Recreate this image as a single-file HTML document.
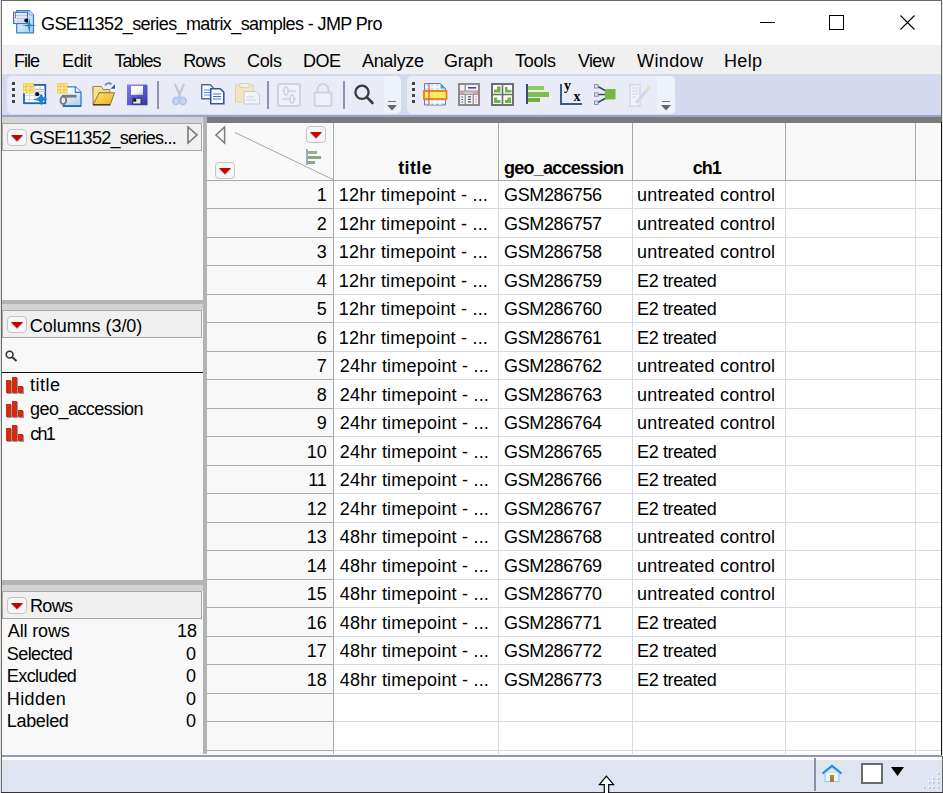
<!DOCTYPE html>
<html><head><meta charset="utf-8">
<style>
*{box-sizing:border-box;margin:0;padding:0}
html,body{width:943px;height:793px;overflow:hidden;background:#e2e2e2}
body{position:relative;font-family:"Liberation Sans",sans-serif;color:#000}
.a{position:absolute}
.t{position:absolute;white-space:nowrap;line-height:20px;font-size:18px;color:#000}
.btn{position:absolute;width:20px;height:17px;border:1px solid #c4c4c4;border-radius:4px;background:#f6f6f6}
.btn:after{content:"";position:absolute;left:2.5px;top:4.5px;border-left:6px solid transparent;border-right:6px solid transparent;border-top:6.5px solid #cc0000;filter:drop-shadow(0 1px 0.6px rgba(0,0,0,.35))}
.hl{position:absolute;height:1px}
.vl{position:absolute;width:1px}
svg{position:absolute;overflow:visible}
</style></head><body>
<!-- window frame -->
<div class="a" style="left:1px;top:0;width:941px;height:793px;background:#6a6a6a"></div>
<div class="a" style="left:941px;top:122px;width:1px;height:634px;background:#111"></div><div class="a" style="left:942px;top:756px;width:1px;height:37px;background:#666"></div>
<div class="a" style="left:1px;top:792px;width:942px;height:1px;background:#333"></div>
<!-- title bar -->
<div class="a" style="left:2px;top:1px;width:939px;height:44px;background:#fff"></div>
<svg style="left:13px;top:10px" width="24" height="24" viewBox="0 0 24 24">
 <defs><linearGradient id="tg" x1="0" y1="0" x2="1" y2="1"><stop offset="0" stop-color="#eef5fc"/><stop offset="1" stop-color="#a9cdee"/></linearGradient></defs>
 <path d="M3.7 0.6h12.5l4.3 4.3v17.9h-16.8z" fill="url(#tg)" stroke="#3b7cc0" stroke-width="1.2"/>
 <path d="M16.2 0.6v4.3h4.3" fill="#dbe8f6" stroke="#6a9ad0" stroke-width="0.8"/>
 <rect x="0.6" y="2.3" width="13.8" height="11.2" fill="#f4f6fb" stroke="#3a78bc" stroke-width="1.2"/>
 <path d="M1 5.5h13M1 8.5h13M1 11h13" stroke="#a8c0e0" stroke-width="0.9"/>
 <path d="M5 3v10M8 3v10M11 3v10" stroke="#c0d0ea" stroke-width="1"/>
 <path d="M2.5 3v5" stroke="#f05858" stroke-width="1"/>
 <circle cx="13.3" cy="10.6" r="2" fill="#000"/>
 <path d="M9 15.3 C12 15.5 13.5 15 15 14.5 L16.5 8 L17.3 14.5 L23.5 15.3 L17.3 16.3 L16.5 23.5 L15 16.5 C13 16 11 16 9 15.3Z" fill="#1f85c6"/>
</svg>
<!--TITLECTRL-->
<div class="a" style="left:760px;top:22px;width:15px;height:1px;background:#000"></div>
<div class="a" style="left:829px;top:15px;width:15px;height:15px;border:1px solid #000"></div>
<svg style="left:900px;top:15px" width="15" height="15"><path d="M0.5 0.5L14.5 14.5M14.5 0.5L0.5 14.5" stroke="#000" stroke-width="1.1"/></svg>
<!-- menu bar -->
<div class="a" style="left:2px;top:45px;width:939px;height:29px;background:#f0f0f0"></div>
<!-- toolbar -->
<div class="a" style="left:2px;top:74px;width:939px;height:41px;background:#d5d9ed"></div>
<div class="a" style="left:2px;top:115px;width:939px;height:2px;background:#9aa3d0"></div>
<div class="a" style="left:7px;top:76px;width:394px;height:38px;background:#e9ecf6;border-radius:5px"></div>
<div class="a" style="left:384px;top:76px;width:17px;height:38px;background:#eef2fb;border-radius:0 5px 5px 0"></div>
<div class="a" style="left:407px;top:76px;width:268px;height:38px;background:#e9ecf6;border-radius:5px"></div>
<div class="a" style="left:657px;top:76px;width:18px;height:38px;background:#eef2fb;border-radius:0 5px 5px 0"></div>
<!-- grips -->
<div class="a" style="left:12px;top:82px;width:3px;height:3px;background:#444;box-shadow:0 6px 0 #444,0 12px 0 #444,0 18px 0 #444"></div>
<div class="a" style="left:412px;top:82px;width:3px;height:3px;background:#444;box-shadow:0 6px 0 #444,0 12px 0 #444,0 18px 0 #444"></div>
<!-- separators -->
<div class="a" style="left:157px;top:81px;width:2px;height:28px;background:#8f92ad"></div>
<div class="a" style="left:267px;top:81px;width:2px;height:28px;background:#8f92ad"></div>
<div class="a" style="left:343px;top:81px;width:2px;height:28px;background:#8f92ad"></div>
<!-- icon 1 new table -->
<svg style="left:23px;top:82px" width="25" height="25" viewBox="0 0 25 25">
 <rect x="1" y="2.9" width="21.3" height="18.3" fill="#fff" stroke="#1f62ad" stroke-width="1.8"/>
 <path d="M2 9.5h20M2 13.5h20M2 17.5h20" stroke="#c8d8ee" stroke-width="1"/>
 <path d="M11 7.5h11" stroke="#f0a0a8" stroke-width="1.2"/>
 <path d="M6.5 4v16M12 4v16M17 4v16" stroke="#c9d8ee" stroke-width="1.2"/>
 <rect x="0" y="1" width="10.8" height="10.5" fill="#f0cc50"/>
 <g fill="#fbe9a0"><circle cx="1.8" cy="2.8" r="1.1"/><circle cx="5.4" cy="2.8" r="1.1"/><circle cx="9" cy="2.8" r="1.1"/><circle cx="1.8" cy="6.3" r="1.1"/><circle cx="5.4" cy="6.3" r="1.8"/><circle cx="9" cy="6.3" r="1.1"/><circle cx="1.8" cy="9.8" r="1.1"/><circle cx="5.4" cy="9.8" r="1.1"/><circle cx="9" cy="9.8" r="1.1"/></g>
 <circle cx="14.2" cy="12.2" r="2.1" fill="#111"/>
 <path d="M10.3 17.6 Q14.5 16.6 16.3 14.8 L18.2 11.6 L20.2 15 Q22 16.2 24.6 17 Q22 17.8 20.2 19 L18.4 23.6 L16.4 19.4 Q14 18.3 10.3 17.6Z" fill="#1b87c9"/>
</svg>
<!-- icon 2 new script -->
<svg style="left:54px;top:80px" width="30" height="28" viewBox="0 0 30 28">
 <defs><linearGradient id="dg" x1="0" y1="0" x2="0.4" y2="1"><stop offset="0.2" stop-color="#ffffff"/><stop offset="1" stop-color="#b4d4f0"/></linearGradient></defs>
 <path d="M9 6.8h12.5l5.5 5.5v13.8h-18z" fill="url(#dg)"/>
 <path d="M9 6.8h12.5l5.5 5.5v13.8h-18" fill="none" stroke="#3a7cc0" stroke-width="1.3"/>
 <path d="M21.3 6.8v5.5h5.7" fill="#e8f2fc" stroke="#3a7cc0" stroke-width="1.2"/>
 <path d="M8.5 26h18.5" stroke="#1f62b0" stroke-width="1.6"/>
 <rect x="3" y="3" width="10.5" height="10.5" fill="#f0cc50"/>
 <g fill="#fbe9a0"><circle cx="4.8" cy="4.8" r="1.1"/><circle cx="8.2" cy="4.8" r="1.1"/><circle cx="11.6" cy="4.8" r="1.1"/><circle cx="4.8" cy="8.2" r="1.1"/><circle cx="8.2" cy="8.2" r="1.6"/><circle cx="11.6" cy="8.2" r="1.1"/><circle cx="4.8" cy="11.6" r="1.1"/><circle cx="8.2" cy="11.6" r="1.1"/><circle cx="11.6" cy="11.6" r="1.1"/></g>
 <path d="M8 16.2h14.5" stroke="#7a7a7a" stroke-width="2.8"/>
 <ellipse cx="9.3" cy="20.2" rx="2.8" ry="3.9" fill="none" stroke="#777" stroke-width="1.9"/>
</svg>
<!-- icon 3 open folder -->
<svg style="left:89px;top:80px" width="30" height="28" viewBox="0 0 30 28">
 <defs><linearGradient id="fb" x1="0" y1="0" x2="1" y2="1"><stop offset="0" stop-color="#faf2a8"/><stop offset="1" stop-color="#e8cc70"/></linearGradient>
 <linearGradient id="ff" x1="0" y1="0" x2="1" y2="1"><stop offset="0" stop-color="#fbe070"/><stop offset="0.6" stop-color="#f6c640"/><stop offset="1" stop-color="#e89a20"/></linearGradient></defs>
 <path d="M4 6.5h8.5l1.5 3h6.8v3.5h-16.8z" fill="url(#fb)" stroke="#9a8658" stroke-width="1"/>
 <path d="M4 6.5v18h3l3-11.5" fill="#f4e490" stroke="#9a8658" stroke-width="1"/>
 <path d="M10.2 12.8h15.3l-4.3 12h-17.2z" fill="url(#ff)" stroke="#8a7448" stroke-width="1"/>
 <path d="M4 24.8h17.2" stroke="#3a2a10" stroke-width="1.2"/>
 <path d="M16 5.3c1.5-2.5 4.5-2.8 6.5-1" fill="none" stroke="#6a82a8" stroke-width="1.6"/>
 <path d="M21.6 8.8l4.4-4.5v4.5z" fill="#3c5c94"/>
</svg>
<!-- icon 4 save -->
<svg style="left:126px;top:84px" width="22" height="22" viewBox="0 0 22 22">
 <defs><linearGradient id="fg" x1="0" y1="0" x2="1" y2="1"><stop offset="0" stop-color="#8484ea"/><stop offset="0.5" stop-color="#5a5ad2"/><stop offset="1" stop-color="#34349a"/></linearGradient>
 <linearGradient id="lg" x1="0" y1="0" x2="1" y2="1"><stop offset="0.5" stop-color="#fdfdff"/><stop offset="1" stop-color="#c8d0ec"/></linearGradient></defs>
 <path d="M1 0.5h19.5l1 1v19.8h-20.5z" fill="url(#fg)"/>
 <rect x="5" y="1.8" width="12" height="9" fill="url(#lg)"/>
 <rect x="6.8" y="14.2" width="8.2" height="5.8" fill="#dfe4f0" stroke="#1a1a3a" stroke-width="0.8"/>
 <rect x="7.2" y="14.6" width="3" height="3" fill="#111"/>
</svg>
<!-- scissors disabled -->
<svg style="left:172px;top:84px" width="16" height="22" viewBox="0 0 16 22">
 <path d="M3 0L9 14M12 0L6 14" stroke="#c4c8d4" stroke-width="2.2"/>
 <ellipse cx="4" cy="17" rx="3.2" ry="3.6" fill="#c8d5ee" stroke="#b3c3e6" stroke-width="1.6"/>
 <ellipse cx="11" cy="17" rx="3.2" ry="3.6" fill="#c8d5ee" stroke="#b3c3e6" stroke-width="1.6"/>
</svg>
<!-- copy -->
<svg style="left:201px;top:84px" width="24" height="21" viewBox="0 0 24 21">
 <path d="M0.7 0.7h8.5l3 3v11h-11.5z" fill="#fff" stroke="#506aa0" stroke-width="1.4"/>
 <path d="M3 6h6M3 8.5h6M3 11h6" stroke="#5c8ed0" stroke-width="1"/>
 <path d="M9.7 4.7h9.5l3.6 3.6v11.5h-13.1z" fill="#fff" stroke="#2b55b0" stroke-width="1.6"/>
 <path d="M12 10h8M12 12.5h8M12 15h8" stroke="#3a74cc" stroke-width="1"/>
</svg>
<!-- paste disabled -->
<svg style="left:235px;top:83px" width="25" height="22" viewBox="0 0 25 22">
 <rect x="0.5" y="2" width="18" height="17" fill="#f3e6bf" stroke="#ddd2b0"/>
 <rect x="5" y="0.5" width="9" height="4" fill="#efefe8" stroke="#d4d4cc"/>
 <path d="M9 8.5h12l3.5 3.5v9h-15.5z" fill="#f1f4f9" stroke="#c4cbd8"/>
 <path d="M11 14h8M11 17h10" stroke="#cbd2de"/>
</svg>
<!-- disabled slider box -->
<svg style="left:277px;top:83px" width="24" height="24" viewBox="0 0 24 24">
 <rect x="1" y="1" width="22" height="22" rx="2" fill="#eef1f8" stroke="#d0d3dc" stroke-width="2"/>
 <path d="M5 8h14M5 16h14" stroke="#d0d3dc" stroke-width="1.6"/>
 <ellipse cx="9" cy="8" rx="2" ry="4" fill="#eef1f8" stroke="#d0d3dc" stroke-width="1.6"/>
 <ellipse cx="15" cy="16" rx="2" ry="4" fill="#eef1f8" stroke="#d0d3dc" stroke-width="1.6"/>
</svg>
<!-- lock disabled -->
<svg style="left:313px;top:83px" width="20" height="24" viewBox="0 0 20 24">
 <path d="M4.5 9.5v-3a5.5 5.5 0 0 1 11 0v3" fill="none" stroke="#d0d3dc" stroke-width="2"/>
 <rect x="1.5" y="9.5" width="17" height="13.5" rx="1" fill="#eef1f8" stroke="#d0d3dc" stroke-width="2"/>
</svg>
<!-- magnifier -->
<svg style="left:353px;top:84px" width="22" height="21" viewBox="0 0 22 21">
 <circle cx="9" cy="8.3" r="6.6" fill="none" stroke="#3a3a3a" stroke-width="2.3"/>
 <path d="M13.8 13.2L19.5 19" stroke="#3a3a3a" stroke-width="2.6" stroke-linecap="round"/>
</svg>
<!-- chevrons -->
<div class="a" style="left:388px;top:100.5px;width:8px;height:1.5px;background:#777"></div>
<svg style="left:387px;top:104.5px" width="10" height="6"><path d="M0 0h10l-5 5.5z" fill="#666"/></svg>
<div class="a" style="left:662px;top:100.5px;width:8px;height:1.5px;background:#777"></div>
<svg style="left:661px;top:104.5px" width="10" height="6"><path d="M0 0h10l-5 5.5z" fill="#666"/></svg>
<!-- data table icon -->
<svg style="left:423px;top:83px" width="25" height="23" viewBox="0 0 25 23">
 <path d="M1.5 0.5h16l5 5v16.5h-21z" fill="#cfe1f6" stroke="#6d78b8" stroke-width="1"/>
 <path d="M2 4h16M2 15h20M2 19h20M7 1v21M12 1v21M17 1v21" stroke="#fff" stroke-width="1.3"/>
 <path d="M17.5 0.5v5h5" fill="#4aa0e8"/>
 <rect x="1" y="8" width="22.5" height="8" fill="#f2ee6a" stroke="#f07a10" stroke-width="1.8"/><path d="M4 12h2.5M9 12h2.5M14 12h2.5M19 12h2" stroke="#e8f050" stroke-width="3"/>
 <path d="M6 1v21" stroke="#f05050" stroke-width="1.2"/>
</svg>
<!-- tabulate -->
<svg style="left:458px;top:83px" width="22" height="23" viewBox="0 0 22 23">
 <rect x="1" y="1" width="20" height="21" fill="#9a9a9a" stroke="#8a8a8a" stroke-width="2"/>
 <rect x="2" y="2" width="4.5" height="5.5" fill="#f4f4f8"/>
 <rect x="8" y="2" width="12" height="5.5" fill="#f4f4f8"/>
 <path d="M10 4.8h8" stroke="#3a3e80" stroke-width="1.5"/>
 <rect x="2" y="8.5" width="18" height="2.5" fill="#c8c8d8"/>
 <path d="M2 9.7h4.5M15 9.7h5" stroke="#f08a9a" stroke-width="2"/>
 <rect x="2" y="12" width="4.5" height="9" fill="#f4f4f8"/>
 <rect x="8" y="12" width="6.5" height="9" fill="#f4f4f8"/>
 <rect x="16" y="12" width="4" height="9" fill="#f4f4f8"/>
 <path d="M4.3 13.5v1M4.3 16v1M4.3 18.5v1" stroke="#3a3e80" stroke-width="1.5"/>
 <path d="M10 13.8h3M10 16.3h3M10 18.8h3" stroke="#3a5c80" stroke-width="1.3"/>
 <path d="M18 13.5v1M18 16v1M18 18.5v1" stroke="#f06070" stroke-width="1.2"/>
</svg>
<!-- grid green -->
<svg style="left:491px;top:83px" width="23" height="23" viewBox="0 0 23 23">
 <rect x="1" y="1" width="21" height="21" fill="#fbfbfb" stroke="#6e6e6e" stroke-width="2"/>
 <path d="M11.5 1v21M1 11.5h21" stroke="#6e6e6e" stroke-width="1.6"/>
 <path d="M3 9.5v-3h3v-3h3.5v6z" fill="#72b43e"/>
 <path d="M14 9.5v-5.5h2.5v3h4v2.5z" fill="#72b43e"/>
 <path d="M3 20v-5.5h3v2.5h3.5v3z" fill="#72b43e"/>
 <path d="M14 20v-3h2.5v-2.5h3.5v5.5z" fill="#72b43e"/>
</svg>
<!-- bar chart -->
<div class="a" style="left:526px;top:84px;width:2px;height:20px;background:#3a4e70"></div>
<div class="a" style="left:528px;top:86px;width:16px;height:4px;background:#8ccc60"></div>
<div class="a" style="left:528px;top:92px;width:21px;height:4.5px;background:#7cbf50"></div>
<div class="a" style="left:528px;top:98px;width:12px;height:4px;background:#6cae40"></div>
<!-- fit y by x -->
<div class="a" style="left:560px;top:84px;width:2px;height:20px;background:#3d5a80"></div>
<div class="a" style="left:560px;top:102.5px;width:22px;height:2px;background:#3d5a80"></div>
<div class="a" style="left:564px;top:79px;font-family:'Liberation Serif';font-weight:700;font-size:14px;line-height:14px">y</div>
<div class="a" style="left:573.5px;top:90px;font-family:'Liberation Serif';font-weight:700;font-size:14px;line-height:14px">x</div>
<!-- model -->
<svg style="left:594px;top:84px" width="22" height="21" viewBox="0 0 22 21">
 <path d="M3 2L12 7M3 10.5h9M3 19L12 14" stroke="#3a4a6a" stroke-width="1.6"/>
 <rect x="0.5" y="0.5" width="3.5" height="3.5" fill="#dfe3f0" stroke="#8a92b8"/>
 <rect x="0.5" y="8.8" width="3.5" height="3.5" fill="#dfe3f0" stroke="#8a92b8"/>
 <rect x="0.5" y="17" width="3.5" height="3.5" fill="#dfe3f0" stroke="#8a92b8"/>
 <rect x="11" y="5" width="10.5" height="10.5" fill="#76b646"/>
</svg>
<!-- script disabled -->
<svg style="left:629px;top:84px" width="22" height="23" viewBox="0 0 22 23">
 <rect x="1" y="0.7" width="10" height="21.5" fill="#f0f3f9" stroke="#d2d8e2" stroke-width="1.4"/>
 <path d="M3 4h6M3 7h6M3 10h6M3 13h4" stroke="#d2d8e2" stroke-width="1"/>
 <path d="M7 19L19 5" stroke="#d3d9e3" stroke-width="3.4"/>
 <circle cx="19.5" cy="4.3" r="2" fill="#f3dcb4"/>
</svg>

<!-- gray band -->
<div class="a" style="left:2px;top:117px;width:201px;height:6px;background:#d3d3d3"></div>
<div class="a" style="left:207px;top:117px;width:734px;height:6px;background:#7a7a7a"></div>
<div class="a" style="left:203px;top:117px;width:4px;height:637px;background:#b3b3b3"></div>
<!-- left panel -->
<div class="a" style="left:2px;top:123px;width:201px;height:631px;background:#f8f8f8"></div>
<!-- box 1 -->
<div class="a" style="left:2px;top:123px;width:200px;height:28px;background:#f0f0f0;border:1px solid #a6a6a6"></div>
<div class="btn" style="left:7px;top:129px"></div>
<svg style="left:187px;top:126px" width="11" height="18"><path d="M1 1L10 9L1 17Z" fill="none" stroke="#777" stroke-width="1.6" stroke-linejoin="miter"/></svg>
<!-- splitter 1 -->
<div class="a" style="left:2px;top:300px;width:201px;height:4px;background:#b3b3b3"></div>
<div class="a" style="left:2px;top:304px;width:201px;height:6px;background:#d3d3d3"></div>
<!-- box 2 -->
<div class="a" style="left:2px;top:310px;width:200px;height:28px;background:#f0f0f0;border:1px solid #a6a6a6"></div>
<div class="btn" style="left:7px;top:316px"></div>
<svg style="left:5px;top:350px" width="13" height="12" viewBox="0 0 13 12"><circle cx="4.6" cy="4.6" r="3.4" fill="none" stroke="#333" stroke-width="1.6"/><path d="M7.3 7.3L11.5 11" stroke="#333" stroke-width="2"/></svg>
<div class="a" style="left:2px;top:372px;width:201px;height:1px;background:#111"></div>
<!-- column icons -->
<svg style="left:6px;top:377px" width="19" height="17" viewBox="0 0 19 17"><g fill="#9a9a9a"><rect x="1" y="4" width="5" height="13"/><rect x="7" y="1" width="5" height="16"/><rect x="13" y="10" width="5" height="7"/></g><g fill="#d42a10"><rect x="0" y="3" width="5" height="13"/><rect x="6" y="0" width="5" height="16"/><rect x="12" y="9" width="5" height="7"/></g></svg>
<svg style="left:6px;top:401px" width="19" height="17" viewBox="0 0 19 17"><g fill="#9a9a9a"><rect x="1" y="4" width="5" height="13"/><rect x="7" y="1" width="5" height="16"/><rect x="13" y="10" width="5" height="7"/></g><g fill="#d42a10"><rect x="0" y="3" width="5" height="13"/><rect x="6" y="0" width="5" height="16"/><rect x="12" y="9" width="5" height="7"/></g></svg>
<svg style="left:6px;top:425px" width="19" height="17" viewBox="0 0 19 17"><g fill="#9a9a9a"><rect x="1" y="4" width="5" height="13"/><rect x="7" y="1" width="5" height="16"/><rect x="13" y="10" width="5" height="7"/></g><g fill="#d42a10"><rect x="0" y="3" width="5" height="13"/><rect x="6" y="0" width="5" height="16"/><rect x="12" y="9" width="5" height="7"/></g></svg>
<!-- splitter 2 -->
<div class="a" style="left:2px;top:580px;width:201px;height:5px;background:#b3b3b3"></div>
<div class="a" style="left:2px;top:585px;width:201px;height:6px;background:#d3d3d3"></div>
<!-- box 3 -->
<div class="a" style="left:2px;top:591px;width:200px;height:28px;background:#f0f0f0;border:1px solid #a6a6a6"></div>
<div class="btn" style="left:7px;top:597px"></div>

<!-- grid -->
<div class="a" style="left:207px;top:123px;width:734px;height:631px;background:#f8f8f8"></div>
<div class="a" style="left:334px;top:181px;width:607px;height:573px;background:#fff"></div>
<div class="a" style="left:207px;top:180px;width:734px;height:1px;background:#a9a9a9"></div>
<div class="a" style="left:333px;top:123px;width:1px;height:57px;background:#a9a9a9"></div>
<div class="a" style="left:498px;top:123px;width:1px;height:57px;background:#a9a9a9"></div>
<div class="a" style="left:632px;top:123px;width:1px;height:57px;background:#a9a9a9"></div>
<div class="a" style="left:785px;top:123px;width:1px;height:57px;background:#a9a9a9"></div>
<div class="a" style="left:915px;top:123px;width:1px;height:57px;background:#a9a9a9"></div>
<div class="a" style="left:333px;top:181px;width:1px;height:573px;background:#a9a9a9"></div>
<div class="a" style="left:498px;top:181px;width:1px;height:573px;background:#d9d9e3"></div>
<div class="a" style="left:632px;top:181px;width:1px;height:573px;background:#d9d9e3"></div>
<div class="a" style="left:785px;top:181px;width:1px;height:573px;background:#d9d9e3"></div>
<div class="a" style="left:915px;top:181px;width:1px;height:573px;background:#d9d9e3"></div>
<div class="a" style="left:207px;top:208px;width:126px;height:1px;background:#a9a9a9"></div>
<div class="a" style="left:334px;top:208px;width:607px;height:1px;background:#d9d9e3"></div>
<div class="a" style="left:207px;top:237px;width:126px;height:1px;background:#a9a9a9"></div>
<div class="a" style="left:334px;top:237px;width:607px;height:1px;background:#d9d9e3"></div>
<div class="a" style="left:207px;top:265px;width:126px;height:1px;background:#a9a9a9"></div>
<div class="a" style="left:334px;top:265px;width:607px;height:1px;background:#d9d9e3"></div>
<div class="a" style="left:207px;top:294px;width:126px;height:1px;background:#a9a9a9"></div>
<div class="a" style="left:334px;top:294px;width:607px;height:1px;background:#d9d9e3"></div>
<div class="a" style="left:207px;top:322px;width:126px;height:1px;background:#a9a9a9"></div>
<div class="a" style="left:334px;top:322px;width:607px;height:1px;background:#d9d9e3"></div>
<div class="a" style="left:207px;top:351px;width:126px;height:1px;background:#a9a9a9"></div>
<div class="a" style="left:334px;top:351px;width:607px;height:1px;background:#d9d9e3"></div>
<div class="a" style="left:207px;top:379px;width:126px;height:1px;background:#a9a9a9"></div>
<div class="a" style="left:334px;top:379px;width:607px;height:1px;background:#d9d9e3"></div>
<div class="a" style="left:207px;top:408px;width:126px;height:1px;background:#a9a9a9"></div>
<div class="a" style="left:334px;top:408px;width:607px;height:1px;background:#d9d9e3"></div>
<div class="a" style="left:207px;top:436px;width:126px;height:1px;background:#a9a9a9"></div>
<div class="a" style="left:334px;top:436px;width:607px;height:1px;background:#d9d9e3"></div>
<div class="a" style="left:207px;top:465px;width:126px;height:1px;background:#a9a9a9"></div>
<div class="a" style="left:334px;top:465px;width:607px;height:1px;background:#d9d9e3"></div>
<div class="a" style="left:207px;top:493px;width:126px;height:1px;background:#a9a9a9"></div>
<div class="a" style="left:334px;top:493px;width:607px;height:1px;background:#d9d9e3"></div>
<div class="a" style="left:207px;top:522px;width:126px;height:1px;background:#a9a9a9"></div>
<div class="a" style="left:334px;top:522px;width:607px;height:1px;background:#d9d9e3"></div>
<div class="a" style="left:207px;top:550px;width:126px;height:1px;background:#a9a9a9"></div>
<div class="a" style="left:334px;top:550px;width:607px;height:1px;background:#d9d9e3"></div>
<div class="a" style="left:207px;top:579px;width:126px;height:1px;background:#a9a9a9"></div>
<div class="a" style="left:334px;top:579px;width:607px;height:1px;background:#d9d9e3"></div>
<div class="a" style="left:207px;top:607px;width:126px;height:1px;background:#a9a9a9"></div>
<div class="a" style="left:334px;top:607px;width:607px;height:1px;background:#d9d9e3"></div>
<div class="a" style="left:207px;top:636px;width:126px;height:1px;background:#a9a9a9"></div>
<div class="a" style="left:334px;top:636px;width:607px;height:1px;background:#d9d9e3"></div>
<div class="a" style="left:207px;top:664px;width:126px;height:1px;background:#a9a9a9"></div>
<div class="a" style="left:334px;top:664px;width:607px;height:1px;background:#d9d9e3"></div>
<div class="a" style="left:207px;top:693px;width:126px;height:1px;background:#a9a9a9"></div>
<div class="a" style="left:334px;top:693px;width:607px;height:1px;background:#d9d9e3"></div>
<div class="a" style="left:207px;top:721px;width:126px;height:1px;background:#a9a9a9"></div>
<div class="a" style="left:334px;top:721px;width:607px;height:1px;background:#d9d9e3"></div>
<div class="a" style="left:207px;top:750px;width:126px;height:1px;background:#a9a9a9"></div>
<div class="a" style="left:334px;top:750px;width:607px;height:1px;background:#d9d9e3"></div>
<svg style="left:215px;top:126px" width="11" height="18"><path d="M9.6 1L1 9L9.6 17Z" fill="none" stroke="#7a7a7a" stroke-width="1.5"/></svg>
<svg style="left:207px;top:123px" width="127" height="58"><path d="M28 9.5L126 56.5" stroke="#a8a8a8" stroke-width="1"/></svg>
<div class="btn" style="left:306px;top:126px"></div>
<div class="btn" style="left:215px;top:162px"></div>
<div class="a" style="left:306px;top:149px;width:1.5px;height:16px;background:#9aaac8"></div>
<div class="a" style="left:308px;top:151px;width:9px;height:3px;background:#9aae94"></div>
<div class="a" style="left:308px;top:156px;width:13px;height:3px;background:#8ea488"></div>
<div class="a" style="left:308px;top:161px;width:7px;height:3px;background:#90a68c"></div>

<div class="t" id="ttl" style="left:41.00px;top:13.56px;font-size:18px;font-weight:400;letter-spacing:-0.615px">GSE11352_series_matrix_samples - JMP Pro</div>
<div class="t" id="m0" style="left:14.00px;top:50.76px;font-size:18px;font-weight:400;letter-spacing:-1.000px">File</div>
<div class="t" id="m1" style="left:62.00px;top:50.76px;font-size:18px;font-weight:400;letter-spacing:-0.333px">Edit</div>
<div class="t" id="m2" style="left:114.40px;top:50.76px;font-size:18px;font-weight:400;letter-spacing:-1.000px">Tables</div>
<div class="t" id="m3" style="left:183.20px;top:50.76px;font-size:18px;font-weight:400;letter-spacing:-0.833px">Rows</div>
<div class="t" id="m4" style="left:247.00px;top:50.76px;font-size:18px;font-weight:400;letter-spacing:-0.333px">Cols</div>
<div class="t" id="m5" style="left:303.00px;top:50.76px;font-size:18px;font-weight:400;letter-spacing:-0.500px">DOE</div>
<div class="t" id="m6" style="left:362.00px;top:50.76px;font-size:18px;font-weight:400;letter-spacing:-0.333px">Analyze</div>
<div class="t" id="m7" style="left:444.00px;top:50.76px;font-size:18px;font-weight:400;letter-spacing:-0.250px">Graph</div>
<div class="t" id="m8" style="left:515.00px;top:50.76px;font-size:18px;font-weight:400;letter-spacing:-0.250px">Tools</div>
<div class="t" id="m9" style="left:578.00px;top:50.76px;font-size:18px;font-weight:400;letter-spacing:-0.667px">View</div>
<div class="t" id="m10" style="left:637.00px;top:50.76px;font-size:18px;font-weight:400;letter-spacing:0.400px">Window</div>
<div class="t" id="m11" style="left:724.00px;top:50.76px;font-size:18px;font-weight:400;letter-spacing:0.333px">Help</div>
<div class="t" id="p1" style="left:29.60px;top:127.56px;font-size:18px;font-weight:400;letter-spacing:-0.735px">GSE11352_series...</div>
<div class="t" id="p2" style="left:29.80px;top:315.76px;font-size:18px;font-weight:400;letter-spacing:-0.042px">Columns (3/0)</div>
<div class="t" id="c1" style="left:30.00px;top:375.26px;font-size:18px;font-weight:400;letter-spacing:0.500px">title</div>
<div class="t" id="c2" style="left:30.00px;top:399.26px;font-size:18px;font-weight:400;letter-spacing:-0.542px">geo_accession</div>
<div class="t" id="c3" style="left:30.20px;top:423.76px;font-size:18px;font-weight:400;letter-spacing:-1.750px">ch1</div>
<div class="t" id="p3" style="left:30.00px;top:595.56px;font-size:18px;font-weight:400;letter-spacing:-0.667px">Rows</div>
<div class="t" id="r0" style="left:7.80px;top:621.06px;font-size:18px;font-weight:400;letter-spacing:-0.143px">All rows</div>
<div class="t" id="rv0" style="right:746.00px;top:621.06px;font-size:18px;font-weight:400;letter-spacing:0.000px">18</div>
<div class="t" id="r1" style="left:6.80px;top:643.66px;font-size:18px;font-weight:400;letter-spacing:-0.571px">Selected</div>
<div class="t" id="rv1" style="right:747.00px;top:643.66px;font-size:18px;font-weight:400;letter-spacing:0.000px">0</div>
<div class="t" id="r2" style="left:6.80px;top:666.26px;font-size:18px;font-weight:400;letter-spacing:-0.571px">Excluded</div>
<div class="t" id="rv2" style="right:747.00px;top:666.26px;font-size:18px;font-weight:400;letter-spacing:0.000px">0</div>
<div class="t" id="r3" style="left:6.80px;top:688.86px;font-size:18px;font-weight:400;letter-spacing:0.400px">Hidden</div>
<div class="t" id="rv3" style="right:747.00px;top:688.86px;font-size:18px;font-weight:400;letter-spacing:0.000px">0</div>
<div class="t" id="r4" style="left:6.80px;top:711.46px;font-size:18px;font-weight:400;letter-spacing:-0.333px">Labeled</div>
<div class="t" id="rv4" style="right:747.00px;top:711.46px;font-size:18px;font-weight:400;letter-spacing:0.000px">0</div>
<div class="t" id="h1" style="left:398.20px;top:157.66px;font-size:18px;font-weight:700;letter-spacing:0.375px">title</div>
<div class="t" id="h2" style="left:504.00px;top:157.66px;font-size:18px;font-weight:700;letter-spacing:-0.750px">geo_accession</div>
<div class="t" id="h3" style="left:692.80px;top:157.66px;font-size:18px;font-weight:700;letter-spacing:-1.000px">ch1</div>
<div class="t" id="n0" style="right:616.20px;top:184.86px;font-size:18px;font-weight:400;letter-spacing:0.000px">1</div>
<div class="t" id="d1_0" style="left:338.80px;top:184.86px;font-size:18px;font-weight:400;letter-spacing:0.211px">12hr timepoint - ...</div>
<div class="t" id="d2_0" style="left:504.00px;top:184.86px;font-size:18px;font-weight:400;letter-spacing:-0.375px">GSM286756</div>
<div class="t" id="d3_0" style="left:637.00px;top:184.86px;font-size:18px;font-weight:400;letter-spacing:0.188px">untreated control</div>
<div class="t" id="n1" style="right:616.20px;top:213.86px;font-size:18px;font-weight:400;letter-spacing:0.000px">2</div>
<div class="t" id="d1_1" style="left:338.80px;top:213.86px;font-size:18px;font-weight:400;letter-spacing:0.211px">12hr timepoint - ...</div>
<div class="t" id="d2_1" style="left:504.00px;top:213.86px;font-size:18px;font-weight:400;letter-spacing:-0.375px">GSM286757</div>
<div class="t" id="d3_1" style="left:637.00px;top:213.86px;font-size:18px;font-weight:400;letter-spacing:0.188px">untreated control</div>
<div class="t" id="n2" style="right:616.20px;top:241.86px;font-size:18px;font-weight:400;letter-spacing:0.000px">3</div>
<div class="t" id="d1_2" style="left:338.80px;top:241.86px;font-size:18px;font-weight:400;letter-spacing:0.211px">12hr timepoint - ...</div>
<div class="t" id="d2_2" style="left:504.00px;top:241.86px;font-size:18px;font-weight:400;letter-spacing:-0.375px">GSM286758</div>
<div class="t" id="d3_2" style="left:637.00px;top:241.86px;font-size:18px;font-weight:400;letter-spacing:0.188px">untreated control</div>
<div class="t" id="n3" style="right:616.20px;top:270.86px;font-size:18px;font-weight:400;letter-spacing:0.000px">4</div>
<div class="t" id="d1_3" style="left:338.80px;top:270.86px;font-size:18px;font-weight:400;letter-spacing:0.211px">12hr timepoint - ...</div>
<div class="t" id="d2_3" style="left:504.00px;top:270.86px;font-size:18px;font-weight:400;letter-spacing:-0.375px">GSM286759</div>
<div class="t" id="d3_3" style="left:637.00px;top:270.86px;font-size:18px;font-weight:400;letter-spacing:-0.368px">E2 treated</div>
<div class="t" id="n4" style="right:616.20px;top:298.86px;font-size:18px;font-weight:400;letter-spacing:0.000px">5</div>
<div class="t" id="d1_4" style="left:338.80px;top:298.86px;font-size:18px;font-weight:400;letter-spacing:0.211px">12hr timepoint - ...</div>
<div class="t" id="d2_4" style="left:504.00px;top:298.86px;font-size:18px;font-weight:400;letter-spacing:-0.375px">GSM286760</div>
<div class="t" id="d3_4" style="left:637.00px;top:298.86px;font-size:18px;font-weight:400;letter-spacing:-0.368px">E2 treated</div>
<div class="t" id="n5" style="right:616.20px;top:327.86px;font-size:18px;font-weight:400;letter-spacing:0.000px">6</div>
<div class="t" id="d1_5" style="left:338.80px;top:327.86px;font-size:18px;font-weight:400;letter-spacing:0.211px">12hr timepoint - ...</div>
<div class="t" id="d2_5" style="left:504.00px;top:327.86px;font-size:18px;font-weight:400;letter-spacing:-0.375px">GSM286761</div>
<div class="t" id="d3_5" style="left:637.00px;top:327.86px;font-size:18px;font-weight:400;letter-spacing:-0.368px">E2 treated</div>
<div class="t" id="n6" style="right:616.20px;top:355.86px;font-size:18px;font-weight:400;letter-spacing:0.000px">7</div>
<div class="t" id="d1_6" style="left:339.80px;top:355.86px;font-size:18px;font-weight:400;letter-spacing:0.211px">24hr timepoint - ...</div>
<div class="t" id="d2_6" style="left:504.00px;top:355.86px;font-size:18px;font-weight:400;letter-spacing:-0.375px">GSM286762</div>
<div class="t" id="d3_6" style="left:637.00px;top:355.86px;font-size:18px;font-weight:400;letter-spacing:0.188px">untreated control</div>
<div class="t" id="n7" style="right:616.20px;top:384.86px;font-size:18px;font-weight:400;letter-spacing:0.000px">8</div>
<div class="t" id="d1_7" style="left:339.80px;top:384.86px;font-size:18px;font-weight:400;letter-spacing:0.211px">24hr timepoint - ...</div>
<div class="t" id="d2_7" style="left:504.00px;top:384.86px;font-size:18px;font-weight:400;letter-spacing:-0.375px">GSM286763</div>
<div class="t" id="d3_7" style="left:637.00px;top:384.86px;font-size:18px;font-weight:400;letter-spacing:0.188px">untreated control</div>
<div class="t" id="n8" style="right:616.20px;top:412.86px;font-size:18px;font-weight:400;letter-spacing:0.000px">9</div>
<div class="t" id="d1_8" style="left:339.80px;top:412.86px;font-size:18px;font-weight:400;letter-spacing:0.211px">24hr timepoint - ...</div>
<div class="t" id="d2_8" style="left:504.00px;top:412.86px;font-size:18px;font-weight:400;letter-spacing:-0.375px">GSM286764</div>
<div class="t" id="d3_8" style="left:637.00px;top:412.86px;font-size:18px;font-weight:400;letter-spacing:0.188px">untreated control</div>
<div class="t" id="n9" style="right:616.20px;top:441.86px;font-size:18px;font-weight:400;letter-spacing:0.000px">10</div>
<div class="t" id="d1_9" style="left:339.80px;top:441.86px;font-size:18px;font-weight:400;letter-spacing:0.211px">24hr timepoint - ...</div>
<div class="t" id="d2_9" style="left:504.00px;top:441.86px;font-size:18px;font-weight:400;letter-spacing:-0.375px">GSM286765</div>
<div class="t" id="d3_9" style="left:637.00px;top:441.86px;font-size:18px;font-weight:400;letter-spacing:-0.368px">E2 treated</div>
<div class="t" id="n10" style="right:616.20px;top:469.86px;font-size:18px;font-weight:400;letter-spacing:0.000px">11</div>
<div class="t" id="d1_10" style="left:339.80px;top:469.86px;font-size:18px;font-weight:400;letter-spacing:0.211px">24hr timepoint - ...</div>
<div class="t" id="d2_10" style="left:504.00px;top:469.86px;font-size:18px;font-weight:400;letter-spacing:-0.375px">GSM286766</div>
<div class="t" id="d3_10" style="left:637.00px;top:469.86px;font-size:18px;font-weight:400;letter-spacing:-0.368px">E2 treated</div>
<div class="t" id="n11" style="right:616.20px;top:498.86px;font-size:18px;font-weight:400;letter-spacing:0.000px">12</div>
<div class="t" id="d1_11" style="left:339.80px;top:498.86px;font-size:18px;font-weight:400;letter-spacing:0.211px">24hr timepoint - ...</div>
<div class="t" id="d2_11" style="left:504.00px;top:498.86px;font-size:18px;font-weight:400;letter-spacing:-0.375px">GSM286767</div>
<div class="t" id="d3_11" style="left:637.00px;top:498.86px;font-size:18px;font-weight:400;letter-spacing:-0.368px">E2 treated</div>
<div class="t" id="n12" style="right:616.20px;top:526.86px;font-size:18px;font-weight:400;letter-spacing:0.000px">13</div>
<div class="t" id="d1_12" style="left:339.80px;top:526.86px;font-size:18px;font-weight:400;letter-spacing:0.211px">48hr timepoint - ...</div>
<div class="t" id="d2_12" style="left:504.00px;top:526.86px;font-size:18px;font-weight:400;letter-spacing:-0.375px">GSM286768</div>
<div class="t" id="d3_12" style="left:637.00px;top:526.86px;font-size:18px;font-weight:400;letter-spacing:0.188px">untreated control</div>
<div class="t" id="n13" style="right:616.20px;top:555.86px;font-size:18px;font-weight:400;letter-spacing:0.000px">14</div>
<div class="t" id="d1_13" style="left:339.80px;top:555.86px;font-size:18px;font-weight:400;letter-spacing:0.211px">48hr timepoint - ...</div>
<div class="t" id="d2_13" style="left:504.00px;top:555.86px;font-size:18px;font-weight:400;letter-spacing:-0.375px">GSM286769</div>
<div class="t" id="d3_13" style="left:637.00px;top:555.86px;font-size:18px;font-weight:400;letter-spacing:0.188px">untreated control</div>
<div class="t" id="n14" style="right:616.20px;top:583.86px;font-size:18px;font-weight:400;letter-spacing:0.000px">15</div>
<div class="t" id="d1_14" style="left:339.80px;top:583.86px;font-size:18px;font-weight:400;letter-spacing:0.211px">48hr timepoint - ...</div>
<div class="t" id="d2_14" style="left:504.00px;top:583.86px;font-size:18px;font-weight:400;letter-spacing:-0.375px">GSM286770</div>
<div class="t" id="d3_14" style="left:637.00px;top:583.86px;font-size:18px;font-weight:400;letter-spacing:0.188px">untreated control</div>
<div class="t" id="n15" style="right:616.20px;top:612.86px;font-size:18px;font-weight:400;letter-spacing:0.000px">16</div>
<div class="t" id="d1_15" style="left:339.80px;top:612.86px;font-size:18px;font-weight:400;letter-spacing:0.211px">48hr timepoint - ...</div>
<div class="t" id="d2_15" style="left:504.00px;top:612.86px;font-size:18px;font-weight:400;letter-spacing:-0.375px">GSM286771</div>
<div class="t" id="d3_15" style="left:637.00px;top:612.86px;font-size:18px;font-weight:400;letter-spacing:-0.368px">E2 treated</div>
<div class="t" id="n16" style="right:616.20px;top:640.86px;font-size:18px;font-weight:400;letter-spacing:0.000px">17</div>
<div class="t" id="d1_16" style="left:339.80px;top:640.86px;font-size:18px;font-weight:400;letter-spacing:0.211px">48hr timepoint - ...</div>
<div class="t" id="d2_16" style="left:504.00px;top:640.86px;font-size:18px;font-weight:400;letter-spacing:-0.375px">GSM286772</div>
<div class="t" id="d3_16" style="left:637.00px;top:640.86px;font-size:18px;font-weight:400;letter-spacing:-0.368px">E2 treated</div>
<div class="t" id="n17" style="right:616.20px;top:669.86px;font-size:18px;font-weight:400;letter-spacing:0.000px">18</div>
<div class="t" id="d1_17" style="left:339.80px;top:669.86px;font-size:18px;font-weight:400;letter-spacing:0.211px">48hr timepoint - ...</div>
<div class="t" id="d2_17" style="left:504.00px;top:669.86px;font-size:18px;font-weight:400;letter-spacing:-0.375px">GSM286773</div>
<div class="t" id="d3_17" style="left:637.00px;top:669.86px;font-size:18px;font-weight:400;letter-spacing:-0.368px">E2 treated</div>

<!-- status bar -->
<div class="a" style="left:2px;top:754px;width:939px;height:1px;background:#f8f8f8"></div>
<div class="a" style="left:2px;top:755px;width:940px;height:2px;background:#8d97c6"></div>
<div class="a" style="left:2px;top:757px;width:940px;height:3px;background:#fbfcfe"></div>
<div class="a" style="left:2px;top:760px;width:940px;height:32px;background:#dfe5f0"></div>
<div class="a" style="left:814px;top:758px;width:2px;height:33px;background:#8a8fa8"></div>
<svg style="left:822px;top:765px" width="20" height="17" viewBox="0 0 20 17">
 <path d="M3 8v8.5h14V8" fill="#e8f4fc" stroke="#8cc8ec" stroke-width="1"/>
 <path d="M0.5 8.5L10 1L19.5 8.5" fill="none" stroke="#1e90d0" stroke-width="2.2"/>
 <rect x="8" y="10" width="4" height="7" fill="#b87a30"/>
</svg>
<div class="a" style="left:861px;top:763px;width:22px;height:21px;background:#fff;border:2px solid #6a6a6a"></div>
<svg style="left:891px;top:767px" width="13" height="10"><path d="M0 0h13l-6.5 9z" fill="#000"/></svg>
<svg style="left:921px;top:771px" width="20" height="20"><rect x="16" y="1" width="1.5" height="1.5" fill="#fff"/><rect x="17" y="2" width="1.5" height="1.5" fill="#a8b2cc"/><rect x="16" y="6" width="1.5" height="1.5" fill="#fff"/><rect x="17" y="7" width="1.5" height="1.5" fill="#a8b2cc"/><rect x="11" y="6" width="1.5" height="1.5" fill="#fff"/><rect x="12" y="7" width="1.5" height="1.5" fill="#a8b2cc"/><rect x="16" y="10" width="1.5" height="1.5" fill="#fff"/><rect x="17" y="11" width="1.5" height="1.5" fill="#a8b2cc"/><rect x="11" y="10" width="1.5" height="1.5" fill="#fff"/><rect x="12" y="11" width="1.5" height="1.5" fill="#a8b2cc"/><rect x="7" y="10" width="1.5" height="1.5" fill="#fff"/><rect x="8" y="11" width="1.5" height="1.5" fill="#a8b2cc"/><rect x="16" y="15" width="1.5" height="1.5" fill="#fff"/><rect x="17" y="16" width="1.5" height="1.5" fill="#a8b2cc"/><rect x="11" y="15" width="1.5" height="1.5" fill="#fff"/><rect x="12" y="16" width="1.5" height="1.5" fill="#a8b2cc"/><rect x="7" y="15" width="1.5" height="1.5" fill="#fff"/><rect x="8" y="16" width="1.5" height="1.5" fill="#a8b2cc"/><rect x="2" y="15" width="1.5" height="1.5" fill="#fff"/><rect x="3" y="16" width="1.5" height="1.5" fill="#a8b2cc"/></svg>
<!-- cursor -->
<svg style="left:598px;top:775px" width="18" height="18" viewBox="0 0 18 18">
 <path d="M8.4 1.2L1.4 9.6H6.3V18.5H10.7V9.6H15.6Z" fill="#fff" stroke="#000" stroke-width="1.2" stroke-linejoin="miter"/>
</svg>
</body></html>
